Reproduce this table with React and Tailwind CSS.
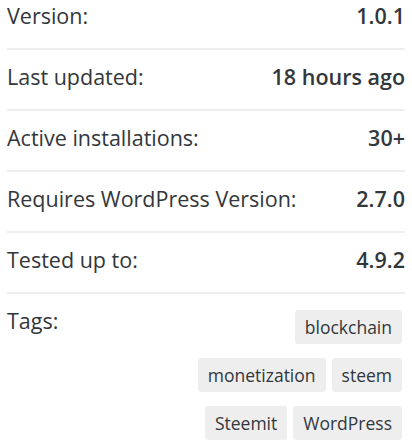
const rows = [
  { label: 'Version:', value: '1.0.1' },
  { label: 'Last updated:', value: '18 hours ago' },
  { label: 'Active installations:', value: '30+' },
  { label: 'Requires WordPress Version:', value: '2.7.0' },
  { label: 'Tested up to:', value: '4.9.2' },
];

const tags = ['blockchain', 'monetization', 'steem', 'Steemit', 'WordPress'];

export default function App() {
  return (
    <div className="bg-white px-[7px] text-[21.5px] leading-[30px] text-[#32373c]" style={{ fontFamily: '"Open Sans", sans-serif' }}>
      <ul>
        {rows.map((row, i) => (
          <li
            key={row.label}
            className={`flex items-start justify-between border-b-2 border-[#eeeeee] pb-[17px] ${i === 0 ? 'pt-[1px]' : 'pt-[12px]'}`}
          >
            <span>{row.label}</span>
            <strong className="font-semibold">{row.value}</strong>
          </li>
        ))}
        <li className="flex items-start justify-between pt-[12px]">
          <span>Tags:</span>
          <div className="flex w-[220px] flex-wrap justify-end gap-x-[6px] gap-y-[14px] pr-[3px] pt-[4px]">
            {tags.map((tag) => (
              <a key={tag} href="#" className="rounded-[3px] bg-[#eeeeee] px-[10px] text-[17.5px] leading-[34px] text-[#32373c]">
                {tag}
              </a>
            ))}
          </div>
        </li>
      </ul>
    </div>
  );
}
